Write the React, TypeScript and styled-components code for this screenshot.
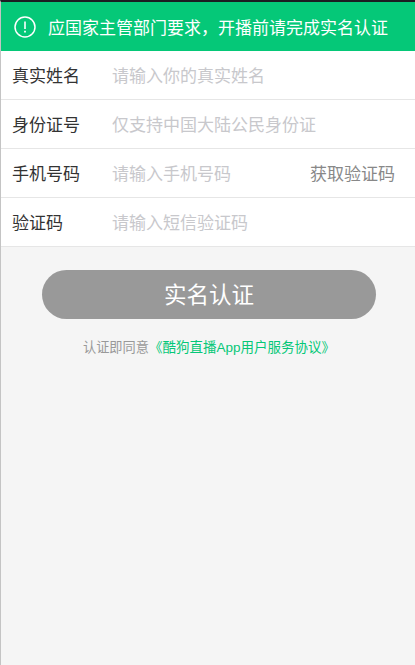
import * as React from 'react';
import styled, { createGlobalStyle } from 'styled-components';

const fields = [
    { label: '真实姓名', placeholder: '请输入你的真实姓名' },
    { label: '身份证号', placeholder: '仅支持中国大陆公民身份证' },
    { label: '手机号码', placeholder: '请输入手机号码', action: '获取验证码' },
    { label: '验证码', placeholder: '请输入短信验证码' },
];

export default function App() {
    return (
        <>
            <GlobalStyle />
            <Page>
                <Notice>
                    <svg width="22" height="22" viewBox="0 0 22 22" fill="none" stroke="#fff">
                        <circle cx="11" cy="11" r="10" strokeWidth="1.5" />
                        <path d="M11 5.5v7.5" strokeWidth="1.6" />
                        <path d="M11 14.8v1.8" strokeWidth="1.8" />
                    </svg>
                    <NoticeText>应国家主管部门要求，开播前请完成实名认证</NoticeText>
                </Notice>
                <Form>
                    {fields.map(field => (
                        <Row key={field.label}>
                            <Label>{field.label}</Label>
                            <Input placeholder={field.placeholder} />
                            {field.action && <CodeButton>{field.action}</CodeButton>}
                        </Row>
                    ))}
                </Form>
                <Submit>实名认证</Submit>
                <Agreement>
                    认证即同意
                    <AgreementLink>
                        《酷狗直播<Latin>App</Latin>用户服务协议》
                    </AgreementLink>
                </Agreement>
            </Page>
        </>
    );
}

const GlobalStyle = createGlobalStyle`
    html,
    body {
        margin: 0;
        height: 100%;
        background: #f5f5f5;
    }
    body {
        font-family: 'Noto Sans CJK SC', 'Liberation Sans', sans-serif;
    }
`;
const Page = styled.div`
    box-sizing: border-box;
    height: 665px;
    border-top: 2px solid #1c1c22;
    border-left: 1px solid #c4c4c4;
    background: #f5f5f5;
    display: flex;
    flex-direction: column;
`;
const Notice = styled.div`
    height: 49px;
    flex-shrink: 0;
    background: #05c878;
    display: flex;
    align-items: center;
    padding-left: 13px;
    gap: 12px;
`;
const NoticeText = styled.span`
    color: #fff;
    font-size: 17px;
    line-height: 24px;
    white-space: nowrap;
`;
const Form = styled.div`
    background: #fff;
    display: flex;
    flex-direction: column;
`;
const Row = styled.div`
    box-sizing: border-box;
    height: 49px;
    display: flex;
    align-items: center;
    padding: 0 20px 0 11px;
    border-bottom: 1px solid #e6e6e6;
`;
const Label = styled.span`
    width: 100px;
    flex-shrink: 0;
    color: #333;
    font-size: 17px;
    line-height: 24px;
`;
const Input = styled.input`
    flex: 1;
    min-width: 0;
    height: 24px;
    border: 0;
    padding: 0;
    outline: 0;
    background: transparent;
    font: inherit;
    font-size: 17px;
    line-height: 24px;
    &::placeholder {
        color: #c8c8cc;
        opacity: 1;
    }
`;
const CodeButton = styled.button`
    border: 0;
    padding: 0;
    background: transparent;
    font: inherit;
    font-size: 17px;
    line-height: 24px;
    color: #888;
    white-space: nowrap;
`;
const Submit = styled.button`
    align-self: flex-start;
    width: 334px;
    height: 49px;
    margin: 23px 0 0 41px;
    padding: 0 0 4px;
    border: 0;
    border-radius: 25px;
    background: #999;
    color: #fff;
    font: inherit;
    font-size: 22.5px;
    line-height: 30px;
`;
const Agreement = styled.p`
    margin: 17px 0 0;
    padding-left: 82px;
    font-size: 13.2px;
    line-height: 20px;
    color: #999;
    white-space: nowrap;
`;
const AgreementLink = styled.span`
    color: #05c878;
    font-size: 13.5px;
`;
const Latin = styled.span`
    font-family: 'Liberation Sans', sans-serif;
`;
